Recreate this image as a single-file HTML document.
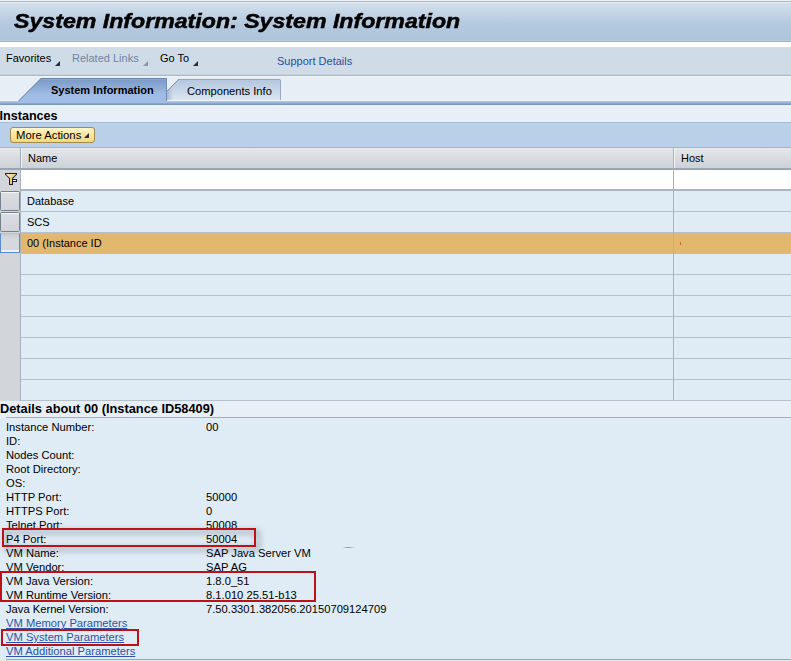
<!DOCTYPE html>
<html><head><meta charset="utf-8">
<style>
*{margin:0;padding:0;box-sizing:border-box}
html,body{width:791px;height:661px;overflow:hidden;background:#dfebf5;font-family:"Liberation Sans",sans-serif;font-size:11px;color:#000}
.a{position:absolute}
.t{position:absolute;white-space:nowrap;line-height:13px}
#title{left:0;top:0;width:791px;height:42px;background:linear-gradient(#d3e0ec 5%,#b4c9de 55%,#aec4dc 100%);border-top:1px solid #eef3f7;box-shadow:inset 0 1px 0 #a9b8c7,inset 0 2px 0 #e6eef7,inset 0 -2px 0 #b8cce0}
#titletxt{left:14px;top:9px;font-size:20px;font-weight:bold;font-style:italic;line-height:24px;transform:scaleX(1.157);-webkit-text-stroke:0.5px #000;transform-origin:0 0;color:#000}
#sep{left:0;top:41px;width:791px;height:1px;background:#a3b3c4}
#white{left:0;top:42px;width:791px;height:5px;background:#fff}
#tb{left:0;top:47px;width:791px;height:28px;background:#cfdce7;box-shadow:inset 0 -1px 0 #c6d3df}
.tri{position:absolute;width:0;height:0;border-left:5px solid transparent;border-bottom:5px solid #2a2a44}
#tabbg{left:0;top:75px;width:791px;height:26px;background:#e9eff6}
#tabstrip{left:0;top:101px;width:791px;height:4px;background:#9db9dd;border-bottom:1px solid #7b9bc4}
#inst{left:0;top:105px;width:791px;height:17px;background:#e9eff6}
#band{left:0;top:122px;width:791px;height:26px;background:#b9d0e8;border-top:1px solid #a5bdd6}
#btn{left:10px;top:127px;width:85px;height:16px;border:1px solid #a38b4c;border-radius:3px;background:linear-gradient(#fff5c8,#f4d77c)}
#hdr{left:0;top:148px;width:791px;height:22px;background:linear-gradient(#e4e7ea,#cdd2d7);border-bottom:2px solid #98a5b4}
#filt{left:0;top:170px;width:791px;height:21px;background:#fff;border-bottom:2px solid #aab5c2}
.row{position:absolute;left:0;width:791px;height:21px;background:#dfebf5;border-bottom:1px solid #b4c0cc}
#leftcol{left:0;top:170px;width:21px;height:231px;background:#d2d5d9;border-right:1px solid #a9b3bf}
.sel{position:absolute;left:0;width:20px;height:20px;background:linear-gradient(#dcdee2,#d0d3d8);border:1px solid #76818c;border-radius:1.5px;box-shadow:inset 0 1px 0 #f4f5f6}
#coldiv{left:673px;top:148px;width:1px;height:252px;background:#a8b3bf}
#det{left:0;top:401px;width:791px;height:17px;background:#e9eff6}
#detline{left:6px;top:417px;width:785px;height:1px;background:#9bb0c8}
#botline{left:6px;top:659px;width:785px;height:1px;background:#8ea6c0}
.lbl{position:absolute;left:6px;white-space:nowrap;line-height:14px;font-size:11.2px}
.val{position:absolute;left:206px;white-space:nowrap;line-height:14px;font-size:11.2px}
.lnk{color:#2d52a8;text-decoration:underline}
.red{position:absolute;border:2px solid #bb1118;filter:drop-shadow(3px 3px 3px rgba(40,50,60,0.6))}
</style></head><body>
<div class="a" id="title"></div>
<div class="t" id="titletxt">System Information: System Information</div>
<div class="a" id="sep"></div>
<div class="a" id="white"></div>
<div class="a" id="tb"></div>
<div class="t" style="left:6px;top:52px">Favorites</div>
<div class="tri" style="left:55px;top:61px"></div>
<div class="t" style="left:72px;top:52px;color:#6f84a3">Related Links</div>
<div class="tri" style="left:143px;top:61px;border-bottom-color:#8497b2"></div>
<div class="t" style="left:160px;top:52px">Go To</div>
<div class="tri" style="left:193px;top:61px"></div>
<div class="t" style="left:277px;top:55px;color:#2b4c9f">Support Details</div>
<svg class="a" style="left:0;top:75px" width="791" height="31" viewBox="0 75 791 31">
<defs>
<linearGradient id="gs" x1="0" y1="0" x2="0" y2="1"><stop offset="0.05" stop-color="#8eaad2"/><stop offset="0.1" stop-color="#7d9cc9"/><stop offset="0.72" stop-color="#a0bce4"/><stop offset="1" stop-color="#a1bde4"/></linearGradient>
<linearGradient id="gc" x1="0" y1="0" x2="0" y2="1"><stop offset="0" stop-color="#b3c6de"/><stop offset="1" stop-color="#dae5f1"/></linearGradient>
<linearGradient id="gsh" x1="0" y1="0" x2="1" y2="0"><stop offset="0" stop-color="#8199b8" stop-opacity="0.55"/><stop offset="1" stop-color="#8199b8" stop-opacity="0"/></linearGradient>
</defs>
<rect x="0" y="75" width="791" height="1" fill="#a9b9ca"/>
<rect x="0" y="76" width="791" height="25" fill="#e8eef5"/>
<rect x="0" y="76" width="791" height="1" fill="#eef3f8"/>
<rect x="0" y="100" width="791" height="1" fill="#f6f8fb"/>
<polygon points="167,100 167,91 178.5,79.5 281,79.5 281,100" fill="url(#gc)"/>
<rect x="178" y="79" width="102" height="1" fill="#8fa8c6"/>
<rect x="280" y="80" width="1" height="20" fill="#92abc8"/>
<line x1="167" y1="91" x2="178.5" y2="79.5" stroke="#6a7f9c" stroke-width="0.8"/>
<polygon points="167,91 173,85 173,100 167,100" fill="url(#gsh)"/>
<rect x="0" y="101" width="791" height="2" fill="#a2bee4"/>
<rect x="0" y="103" width="791" height="1" fill="#8aa4c8"/>
<rect x="0" y="104" width="791" height="1" fill="#7d97bb"/>
<polygon points="18.5,101 41.5,78 166.5,78 166.5,101" fill="url(#gs)"/>
<rect x="41" y="78" width="125" height="1" fill="#6f88ae"/>
<rect x="166" y="78" width="1" height="23" fill="#6f8db8"/>
<line x1="18.5" y1="101" x2="41.5" y2="78" stroke="#4f6b95" stroke-width="0.9"/>
</svg>
<div class="t" style="left:51px;top:84px;font-weight:bold">System Information</div>
<div class="t" style="left:187px;top:85px;font-size:11.15px">Components Info</div>
<div class="a" id="inst"></div>
<div class="t" style="left:-0.5px;top:109px;font-size:12.6px;font-weight:bold;line-height:14px">Instances</div>
<div class="a" id="band"></div>
<div class="a" id="btn"></div>
<div class="t" style="left:16px;top:129px;font-size:11.3px">More Actions</div>
<div class="tri" style="left:84px;top:133px"></div>
<div class="a" id="hdr"></div>
<div class="a" style="left:0;top:147px;width:791px;height:1px;background:#aab6c2"></div>
<div class="t" style="left:28px;top:152px">Name</div>
<div class="t" style="left:681px;top:152px">Host</div>
<div class="a" id="filt"></div>
<div class="row" style="top:191px"></div>
<div class="row" style="top:212px"></div>
<div class="row" style="top:233px;background:#e2b86f"></div>
<div class="row" style="top:254px"></div>
<div class="row" style="top:275px"></div>
<div class="row" style="top:296px"></div>
<div class="row" style="top:317px"></div>
<div class="row" style="top:338px"></div>
<div class="row" style="top:359px"></div>
<div class="row" style="top:380px"></div>
<div class="a" id="leftcol"></div>
<div class="a" id="coldiv"></div>
<div class="a" style="left:20px;top:148px;width:1px;height:20px;background:#a0abb7"></div><div class="a" style="left:21px;top:148px;width:1px;height:20px;background:#f2f4f6"></div><div class="a" style="left:674px;top:148px;width:1px;height:20px;background:#f2f4f6"></div>
<svg class="a" style="left:4px;top:172px" width="15" height="14" viewBox="0 0 15 14">
<defs><linearGradient id="gf" x1="0" y1="0" x2="1" y2="1"><stop offset="0" stop-color="#fff6d2"/><stop offset="0.45" stop-color="#ecd084"/><stop offset="1" stop-color="#d9b556"/></linearGradient></defs>
<path d="M1,1 H13 V2.6 L9,6.6 V7 H13 V10 H9 V13 H5 V6.6 L1,2.6 Z" fill="#1f1f38"/>
<path d="M2,2 H12 V2.3 L8,6.3 V12 H6 V6.3 L2,2.3 Z" fill="url(#gf)"/>
<path d="M9,8 H12 V9 H9 Z" fill="#fff"/>
</svg>
<div class="sel" style="top:191px"></div>
<div class="sel" style="top:212px"></div>
<div class="sel" style="top:233px;border-radius:0;border-color:#b9c0c7 #5b8ad6 #5b8ad6 #5b8ad6;background:linear-gradient(#c9cdd2,#d5d8dc 30%);box-shadow:inset 0 -2px 0 #eef0f2"></div>
<div class="t" style="left:27px;top:195px">Database</div>
<div class="t" style="left:27px;top:216px">SCS</div>
<div class="t" style="left:27px;top:237px">00 (Instance ID</div>
<div class="a" style="left:680px;top:242px;width:1px;height:3px;background:#d8661f"></div>
<div class="a" id="det"></div>
<div class="t" style="left:0;top:402px;font-size:12.8px;font-weight:bold;line-height:14px">Details about 00 (Instance ID58409)</div>
<div class="a" id="detline"></div>
<div class="lbl" style="top:420px">Instance Number:</div><div class="val" style="top:420px">00</div>
<div class="lbl" style="top:434px">ID:</div>
<div class="lbl" style="top:448px">Nodes Count:</div>
<div class="lbl" style="top:462px">Root Directory:</div>
<div class="lbl" style="top:476px">OS:</div>
<div class="lbl" style="top:490px">HTTP Port:</div><div class="val" style="top:490px">50000</div>
<div class="lbl" style="top:504px">HTTPS Port:</div><div class="val" style="top:504px">0</div>
<div class="lbl" style="top:518px">Telnet Port:</div><div class="val" style="top:518px">50008</div>
<div class="lbl" style="top:532px">P4 Port:</div><div class="val" style="top:532px">50004</div>
<div class="lbl" style="top:546px">VM Name:</div><div class="val" style="top:546px">SAP Java Server VM</div>
<div class="lbl" style="top:560px">VM Vendor:</div><div class="val" style="top:560px">SAP AG</div>
<div class="lbl" style="top:574px">VM Java Version:</div><div class="val" style="top:574px">1.8.0_51</div>
<div class="lbl" style="top:588px">VM Runtime Version:</div><div class="val" style="top:588px">8.1.010 25.51-b13</div>
<div class="lbl" style="top:602px">Java Kernel Version:</div><div class="val" style="top:602px">7.50.3301.382056.20150709124709</div>
<div class="lbl lnk" style="top:616px">VM Memory Parameters</div>
<div class="lbl lnk" style="top:630px">VM System Parameters</div>
<div class="lbl lnk" style="top:644px">VM Additional Parameters</div>
<div class="a" id="botline"></div>
<div class="red" style="left:2px;top:528px;width:254px;height:19px"></div>
<div class="red" style="left:0;top:571px;width:316px;height:31px;filter:none"></div>
<div class="red" style="left:1px;top:629px;width:138px;height:17px;filter:none"></div>
<div class="a" style="left:342px;top:546.5px;width:14px;height:1.6px;border-radius:50%;background:linear-gradient(90deg,rgba(110,120,130,0),rgba(110,120,130,.75) 40%,rgba(110,120,130,0));filter:blur(0.5px)"></div>
</body></html>
